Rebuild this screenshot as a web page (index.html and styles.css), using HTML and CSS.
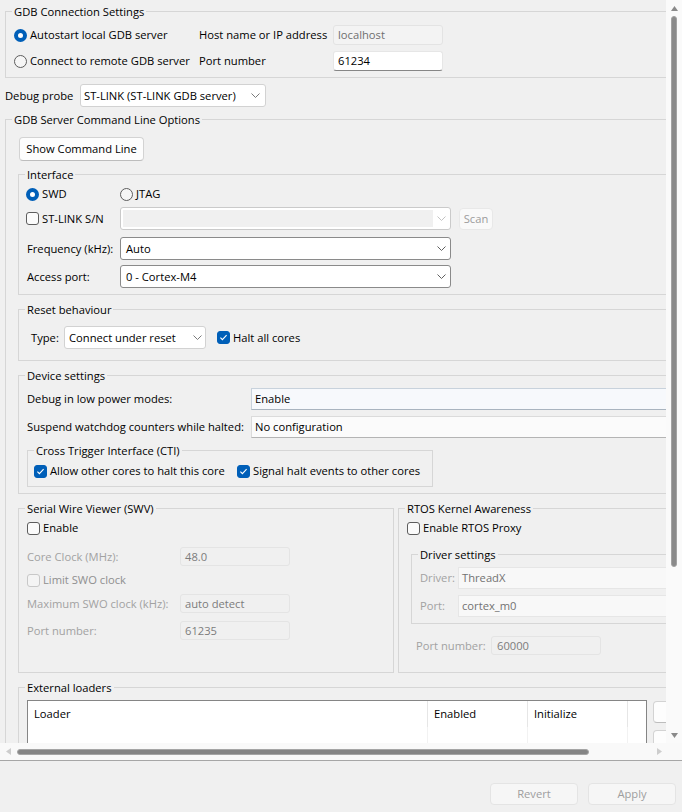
FILE: index.html
```html
<!DOCTYPE html>
<html>
<head>
<meta charset="utf-8">
<title>Debugger</title>
<link rel="stylesheet" href="styles.css">
</head>
<body>
<div class="window">
  <div class="main">
    <div class="viewport">
      <div class="content">

        <fieldset class="grp g-conn">
          <legend>GDB Connection Settings</legend>
          <div class="conn-body">
            <label class="opt"><span class="radio on"></span>Autostart local GDB server</label>
            <span>Host name or IP address</span>
            <span class="field ro">localhost</span>
            <label class="opt"><span class="radio"></span>Connect to remote GDB server</label>
            <span>Port number</span>
            <span class="field txt">61234</span>
          </div>
        </fieldset>

        <div class="probe-row">
          <span class="probe-lbl">Debug probe</span>
          <span class="combo soft probe"><span>ST-LINK (ST-LINK GDB server)</span><svg class="chev" width="9" height="5" viewBox="0 0 9 5"><path d="M0.5 0.5 L4.5 4.5 L8.5 0.5" fill="none" stroke="#7a7a7a"/></svg></span>
        </div>

        <fieldset class="grp g-outer">
          <legend>GDB Server Command Line Options</legend>
          <div class="outer-body">
            <button class="btn show-cmd">Show Command Line</button>

            <fieldset class="grp g-iface">
              <legend>Interface</legend>
              <div class="iface-body">
                <div class="row r-swd">
                  <label class="opt c1"><span class="radio on"></span>SWD</label>
                  <label class="opt"><span class="radio"></span>JTAG</label>
                </div>
                <div class="row r-sn">
                  <label class="opt c1"><span class="check"></span>ST-LINK S/N</label>
                  <span class="combo dis w331"><span class="dis-fill"></span><svg class="chev" width="9" height="5" viewBox="0 0 9 5"><path d="M0.5 0.5 L4.5 4.5 L8.5 0.5" fill="none" stroke="#c2c2c2"/></svg></span>
                  <button class="btn scan">Scan</button>
                </div>
                <div class="row r-freq">
                  <span class="c1">Frequency (kHz):</span>
                  <span class="combo w331"><span>Auto</span><svg class="chev" width="9" height="5" viewBox="0 0 9 5"><path d="M0.5 0.5 L4.5 4.5 L8.5 0.5" fill="none" stroke="#606060"/></svg></span>
                </div>
                <div class="row r-ap">
                  <span class="c1">Access port:</span>
                  <span class="combo w331"><span>0 - Cortex-M4</span><svg class="chev" width="9" height="5" viewBox="0 0 9 5"><path d="M0.5 0.5 L4.5 4.5 L8.5 0.5" fill="none" stroke="#606060"/></svg></span>
                </div>
              </div>
            </fieldset>

            <fieldset class="grp g-reset">
              <legend>Reset behaviour</legend>
              <div class="row reset-body">
                <span class="type-lbl">Type:</span>
                <span class="combo soft type"><span>Connect under reset</span><svg class="chev" width="9" height="5" viewBox="0 0 9 5"><path d="M0.5 0.5 L4.5 4.5 L8.5 0.5" fill="none" stroke="#7a7a7a"/></svg></span>
                <label class="opt halt"><span class="check on"><svg width="11" height="11" viewBox="0 0 11 11"><path d="M2.4 5.6 L4.4 7.7 L8.6 3.2" fill="none" stroke="#fff" stroke-width="1.1"/></svg></span>Halt all cores</label>
              </div>
            </fieldset>

            <fieldset class="grp g-dev">
              <legend>Device settings</legend>
              <div class="dev-body">
                <div class="dev-grid">
                  <span>Debug in low power modes:</span>
                  <span class="dfield hl">Enable</span>
                  <span>Suspend watchdog counters while halted:</span>
                  <span class="dfield">No configuration</span>
                </div>
                <fieldset class="grp g-cti">
                  <legend>Cross Trigger Interface (CTI)</legend>
                  <div class="row cti-body">
                    <label class="opt cti-c1"><span class="check on"><svg width="11" height="11" viewBox="0 0 11 11"><path d="M2.4 5.6 L4.4 7.7 L8.6 3.2" fill="none" stroke="#fff" stroke-width="1.1"/></svg></span>Allow other cores to halt this core</label>
                    <label class="opt"><span class="check on"><svg width="11" height="11" viewBox="0 0 11 11"><path d="M2.4 5.6 L4.4 7.7 L8.6 3.2" fill="none" stroke="#fff" stroke-width="1.1"/></svg></span>Signal halt events to other cores</label>
                  </div>
                </fieldset>
              </div>
            </fieldset>

            <div class="cols">
              <fieldset class="grp g-swv">
                <legend>Serial Wire Viewer (SWV)</legend>
                <div class="swv-body">
                  <label class="opt blk r-en"><span class="check"></span>Enable</label>
                  <div class="row r-cc">
                    <span class="swv-lbl dim">Core Clock (MHz):</span>
                    <span class="field off w110">48.0</span>
                  </div>
                  <label class="opt blk r-lim dimmer"><span class="check dis"></span>Limit SWO clock</label>
                  <div class="row r-max">
                    <span class="swv-lbl dim">Maximum SWO clock (kHz):</span>
                    <span class="field off w110">auto detect</span>
                  </div>
                  <div class="row r-port">
                    <span class="swv-lbl dim">Port number:</span>
                    <span class="field off w110">61235</span>
                  </div>
                </div>
              </fieldset>

              <fieldset class="grp g-rtos">
                <legend>RTOS Kernel Awareness</legend>
                <div class="rtos-body">
                  <label class="opt blk r-en"><span class="check"></span>Enable RTOS Proxy</label>
                  <fieldset class="grp g-drv">
                    <legend>Driver settings</legend>
                    <div class="drv-body">
                      <div class="row r-drv">
                        <span class="drv-lbl dim">Driver:</span>
                        <span class="dfield off2">ThreadX</span>
                      </div>
                      <div class="row r-dport">
                        <span class="drv-lbl dim">Port:</span>
                        <span class="dfield off2">cortex_m0</span>
                      </div>
                    </div>
                  </fieldset>
                  <div class="row r-rport">
                    <span class="rport-lbl dim">Port number:</span>
                    <span class="field off w110 rport">60000</span>
                  </div>
                </div>
              </fieldset>
            </div>

            <fieldset class="grp g-ext">
              <legend>External loaders</legend>
              <div class="ext-body">
                <div class="table">
                  <div class="thead">
                    <span class="th c-loader">Loader</span>
                    <span class="th c-en">Enabled</span>
                    <span class="th c-init">Initialize</span>
                    <span class="th c-rest"></span>
                  </div>
                  <div class="tbody">
                    <span class="td c-loader"></span>
                    <span class="td c-en"></span>
                    <span class="td c-init"></span>
                  </div>
                </div>
                <div class="side-btns">
                  <button class="btn side"></button>
                  <button class="btn side"></button>
                </div>
              </div>
            </fieldset>
          </div>
        </fieldset>

      </div>
    </div>
    <div class="vscroll">
      <div class="arrow"><svg width="7" height="5" viewBox="0 0 7 5"><path d="M0 5 L3.5 0 L7 5 Z" fill="#8a8a8a"/></svg></div>
      <div class="vthumb"></div>
      <div class="spacer"></div>
      <div class="arrow"><svg width="7" height="5" viewBox="0 0 7 5"><path d="M0 0 L3.5 5 L7 0 Z" fill="#8a8a8a"/></svg></div>
    </div>
  </div>
  <div class="hscroll">
    <div class="harrow"><svg width="5" height="7" viewBox="0 0 5 7"><path d="M5 0 L0 3.5 L5 7 Z" fill="#cdcdcd"/></svg></div>
    <div class="hthumb"></div>
    <div class="spacer"></div>
    <div class="harrow"><svg width="5" height="7" viewBox="0 0 5 7"><path d="M0 0 L5 3.5 L0 7 Z" fill="#cdcdcd"/></svg></div>
  </div>
  <div class="sep"></div>
  <div class="footer">
    <button class="btn foot">Revert</button>
    <button class="btn foot">Apply</button>
  </div>
</div>
</body>
</html>
```
FILE: styles.css
```css
* { box-sizing: border-box; }
html, body { margin: 0; padding: 0; }
body {
  width: 682px; height: 812px; overflow: hidden;
  background: #f0f0f0; color: #000;
  font-family: "Open Sans", "Noto Sans", "DejaVu Sans", sans-serif;
  font-size: 11.2px; line-height: 16px;
}
button { font: inherit; color: inherit; margin: 0; padding: 0; cursor: default; }

.window { display: flex; flex-direction: column; height: 812px; }
.main { display: flex; height: 743px; flex: none; }
.viewport { width: 666px; height: 743px; overflow: hidden; flex: none; }
.content { width: 740px; padding: 3px 0 0 5px; }

/* groups */
.grp { margin: 0; padding: 0; border: 1px solid #d6d6d6; min-width: 0; }
.grp > legend { margin-left: 6px; padding: 0 2px; line-height: 17px; white-space: nowrap; }

.row { display: flex; align-items: center; }
.opt { display: inline-flex; align-items: center; gap: 3px; white-space: nowrap; }
.opt.blk { display: flex; width: max-content; }

.radio {
  flex: none; width: 13px; height: 13px; border-radius: 50%;
  border: 1px solid #5d5d5d; background: #f6f6f6;
}
.radio.on { border: 4px solid #005fb8; background: #fff; }

.check {
  flex: none; width: 13px; height: 13px; border-radius: 3px;
  border: 1px solid #5d5d5d; background: #fbfbfb;
  display: flex; align-items: center; justify-content: center;
}
.check.on { background: #005fb8; border-color: #005fb8; }
.check.dis { border-color: #c8c8c8; background: #f4f4f4; }
.check svg { display: block; }

.dim { color: #a2a2a2; }
.dimmer { color: #8f8f8f; }

/* fields */
.field {
  height: 20px; display: flex; align-items: center; padding: 0 4px;
  border: 1px solid #e2e2e2; border-radius: 3px; white-space: nowrap;
}
.field.ro { background: #f3f3f3; color: #6f6f6f; border-color: #e3e3e3; }
.field.txt { background: #fff; border-color: #e6e6e6; border-bottom-color: #868686; }
.field.off { height: 19px; background: #f0f0f0; color: #7c7c7c; border-color: #e4e4e4; }
.w110 { width: 110px; flex: none; }

.combo {
  display: flex; align-items: center; justify-content: space-between;
  height: 23px; background: #fff; border: 1px solid #8a8a8a; border-radius: 3px;
  padding: 0 4px 0 5px; white-space: nowrap; flex: none;
}
.combo.soft { border-color: #d2d2d2; }
.w331 { width: 331px; }
.combo.dis { border-color: #cacaca; padding: 2px 4px 2px 2px; }
.dis-fill { width: 310px; height: 100%; background: #f0f0f0; }
.chev { display: block; flex: none; }

.btn {
  background: #fdfdfd; border: 1px solid #d3d3d3; border-bottom-color: #bdbdbd;
  border-radius: 4px; display: flex; align-items: center; justify-content: center;
}

/* group 1 */
.conn-body {
  display: grid; grid-template-columns: 185px 134px 110px;
  grid-auto-rows: 20px; row-gap: 6px; align-items: center;
  padding: 5px 0 6px 8px;
}

.probe-row { display: flex; align-items: center; height: 23px; margin-top: 6px; }
.probe-lbl { width: 75px; flex: none; }
.probe { width: 186px; padding-left: 3px; padding-right: 5px; }

/* outer */
.g-outer { margin-top: 4px; }
.outer-body { padding: 9px 12px 0 12px; }
.show-cmd { width: 125px; height: 24px; margin-left: 1px; }

/* interface */
.g-iface { margin-top: 5px; }
.iface-body { padding: 2px 0 6px 7px; }
.c1 { width: 94px; flex: none; }
.iface-body .row > span.c1 { padding-left: 1px; }
.r-swd { height: 18px; }
.r-sn { margin-top: 4px; }
.r-freq { margin-top: 7px; }
.r-ap { margin-top: 5px; }
.scan {
  width: 34px; height: 22px; margin-left: 8px;
  background: #f9f9f9; border-color: #e8e8e8; color: #9c9c9c;
}

/* reset */
.g-reset { margin-top: 6px; }
.reset-body { padding: 8px 0 11px 12px; }
.type-lbl { width: 33px; flex: none; }
.type { width: 142px; padding-left: 4px; padding-right: 3px; }
.halt { margin-left: 11px; }

/* device */
.g-dev { margin-top: 6px; }
.dev-body { padding: 4px 8px 6px 8px; }
.dev-grid {
  display: grid; grid-template-columns: 224px 1fr; grid-auto-rows: 22px;
  row-gap: 6px; align-items: center;
}
.dfield {
  height: 22px; display: flex; align-items: center; padding: 0 3px;
  background: #fbfbfb; border: 1px solid #dbdbdb; border-bottom-color: #b4b4b4;
  white-space: nowrap;
}
.dfield.hl { background: #f7f9fc; border-color: #c8d2dc; border-bottom-color: #a9b4bf; }
.dfield.off2 { background: #f8f8f8; border-color: #e6e6e6; color: #727272; flex: 1; }

.g-cti { width: 406px; margin-top: 4px; }
.cti-body { padding: 3px 0 6px 6px; height: 18px; box-sizing: content-box; }
.cti-c1 { width: 203px; }

/* swv / rtos */
.cols { display: flex; gap: 4px; margin-top: 6px; align-items: stretch; }
.g-swv { width: 376px; flex: none; }
.g-rtos { flex: 1; }
.swv-body { padding: 2px 0 0 8px; }
.r-en { height: 18px; }
.swv-lbl { width: 153px; flex: none; }
.r-cc { margin-top: 10px; }
.r-lim { height: 18px; margin-top: 5px; }
.r-max { margin-top: 5px; }
.r-port { margin-top: 8px; }

.rtos-body { padding: 2px 8px 17px 8px; }
.g-drv { margin: 9px 0 0 4px; }
.drv-body { padding: 4px 8px 6px 8px; }
.drv-lbl { width: 38px; flex: none; }
.r-dport { margin-top: 6px; }
.r-rport { margin: 12px 0 0 9px; }
.rport-lbl { width: 75px; flex: none; }
.rport { padding-left: 5px; }

/* external loaders */
.g-ext { margin-top: 6px; }
.ext-body { display: flex; gap: 6px; padding: 4px 0 0 8px; }
.table { width: 620px; height: 110px; flex: none; border: 1px solid #858585; background: #fff; }
.thead, .tbody { display: flex; }
.thead { height: 26px; }
.tbody { height: 80px; }
.th, .td { display: flex; align-items: center; padding-left: 6px; border-right: 1px solid #e6e6e6; flex: none; }
.td { border-right-color: #f2f2f2; }
.c-loader { width: 400px; }
.c-en { width: 100px; }
.c-init { width: 100px; }
.c-rest { flex: 1; border-right: none; }
.side-btns { display: flex; flex-direction: column; gap: 7px; padding-top: 1px; }
.side { width: 40px; height: 22px; }

/* scrollbars */
.vscroll { width: 16px; flex: none; background: #fafafa; display: flex; flex-direction: column; align-items: center; }
.arrow { height: 16px; display: flex; align-items: center; justify-content: center; flex: none; }
.vthumb { width: 6px; height: 551px; border-radius: 3px; background: #8a8a8a; border: 1px solid #a2a2a2; flex: none; }
.spacer { flex: 1; }

.hscroll { height: 17px; flex: none; background: #f9f9f9; display: flex; align-items: center; padding: 0 20px 0 5px; }
.harrow { width: 6px; display: flex; align-items: center; justify-content: center; flex: none; }
.hthumb { width: 572px; height: 6px; margin-left: 6px; border-radius: 3px; background: #858585; border: 1px solid #a5a5a5; flex: none; }

.sep { height: 1px; background: #a6a6a6; flex: none; }

.footer { flex: 1; display: flex; justify-content: flex-end; gap: 10px; padding: 22px 6px 0 0; }
.foot { width: 88px; height: 22px; background: #f6f6f6; border: 1px solid #e4e4e4; color: #9e9e9e; }
```
